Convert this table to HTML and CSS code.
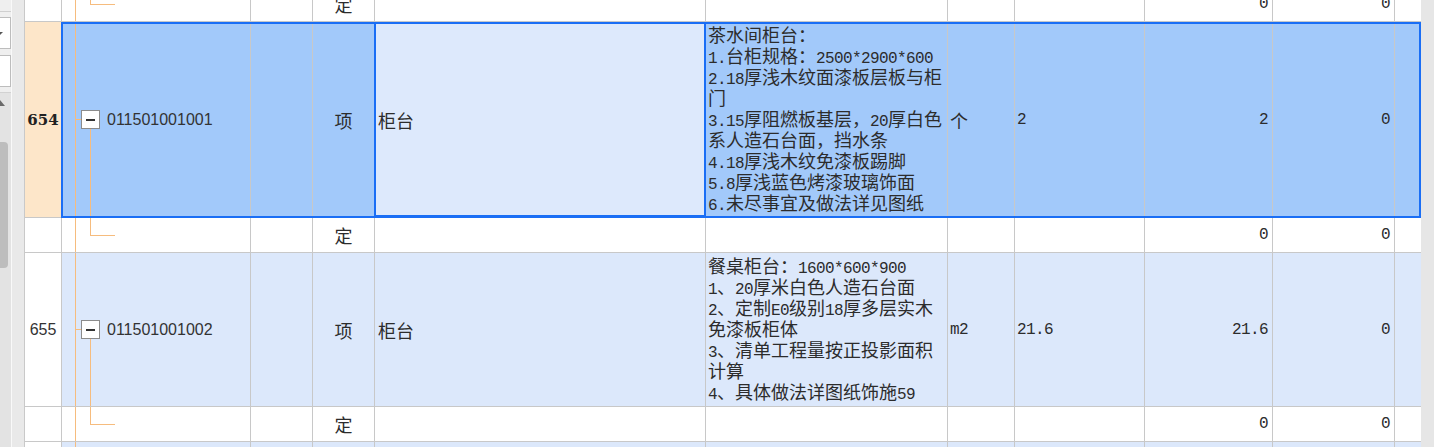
FILE: index.html
```html
<!DOCTYPE html>
<html lang="zh-CN">
<head>
<meta charset="utf-8">
<title>清单列表</title>
<link rel="stylesheet" href="styles.css">
</head>
<body>
<div class="app">
  <aside class="side">
    <div class="side-a">
      <div class="side-top"></div>
      <div class="side-box side-combo"><span class="combo-arrow"></span></div>
      <div class="side-box side-box2"></div>
      <div class="side-scroll">
        <span class="scroll-up"></span>
        <span class="scroll-thumb"></span>
      </div>
    </div>
    <div class="side-b"></div>
  </aside>

  <main class="grid">
    <div class="rows">
      <div class="row ding">
        <div class="c num"></div>
        <div class="c tree"></div>
        <div class="c"></div>
        <div class="c type">定</div>
        <div class="c"></div>
        <div class="c"></div>
        <div class="c"></div>
        <div class="c"></div>
        <div class="c r"><span class="h">0</span></div>
        <div class="c r"><span class="h">0</span></div>
        <div class="c last"></div>
      </div>

      <div class="row item sel">
        <div class="c num">654</div>
        <div class="c tree"><span class="tog"></span><span class="code">011501001001</span></div>
        <div class="c"></div>
        <div class="c type">项</div>
        <div class="c name cur">柜台</div>
        <div class="c feat">茶水间柜台：<br><span class="h">1.</span>台柜规格：<span class="h">2500*2900*600</span><br><span class="h">2.18</span>厚浅木纹面漆板层板与柜<br>门<br><span class="h">3.15</span>厚阻燃板基层，<span class="h">20</span>厚白色<br>系人造石台面，挡水条<br><span class="h">4.18</span>厚浅木纹免漆板踢脚<br><span class="h">5.8</span>厚浅蓝色烤漆玻璃饰面<br><span class="h">6.</span>未尽事宜及做法详见图纸</div>
        <div class="c unit">个</div>
        <div class="c expr"><span class="h">2</span></div>
        <div class="c r"><span class="h">2</span></div>
        <div class="c r"><span class="h">0</span></div>
        <div class="c last"></div>
      </div>

      <div class="row ding">
        <div class="c num"></div>
        <div class="c tree"></div>
        <div class="c"></div>
        <div class="c type">定</div>
        <div class="c"></div>
        <div class="c"></div>
        <div class="c"></div>
        <div class="c"></div>
        <div class="c r"><span class="h">0</span></div>
        <div class="c r"><span class="h">0</span></div>
        <div class="c last"></div>
      </div>

      <div class="row item">
        <div class="c num">655</div>
        <div class="c tree"><span class="tog"></span><span class="code">011501001002</span></div>
        <div class="c"></div>
        <div class="c type">项</div>
        <div class="c name">柜台</div>
        <div class="c feat">餐桌柜台：<span class="h">1600*600*900</span><br><span class="h">1</span>、<span class="h">20</span>厚米白色人造石台面<br><span class="h">2</span>、定制<span class="h">E0</span>级别<span class="h">18</span>厚多层实木<br>免漆板柜体<br><span class="h">3</span>、清单工程量按正投影面积<br>计算<br><span class="h">4</span>、具体做法详图纸饰施<span class="h">59</span></div>
        <div class="c unit"><span class="h">m2</span></div>
        <div class="c expr"><span class="h">21.6</span></div>
        <div class="c r"><span class="h">21.6</span></div>
        <div class="c r"><span class="h">0</span></div>
        <div class="c last"></div>
      </div>

      <div class="row ding">
        <div class="c num"></div>
        <div class="c tree"></div>
        <div class="c"></div>
        <div class="c type">定</div>
        <div class="c"></div>
        <div class="c"></div>
        <div class="c"></div>
        <div class="c"></div>
        <div class="c r"><span class="h">0</span></div>
        <div class="c r"><span class="h">0</span></div>
        <div class="c last"></div>
      </div>

      <div class="row item tail">
        <div class="c num"></div>
        <div class="c tree"><span class="tog"></span></div>
        <div class="c"></div>
        <div class="c"></div>
        <div class="c name"></div>
        <div class="c"></div>
        <div class="c"></div>
        <div class="c"></div>
        <div class="c"></div>
        <div class="c"></div>
        <div class="c last"></div>
      </div>
    </div>
  </main>

  <div class="vstrip"></div>
</div>
</body>
</html>
```

FILE: styles.css
```css
* {
  box-sizing: border-box;
  margin: 0;
  padding: 0;
}

html,
body {
  width: 1434px;
  height: 447px;
  overflow: hidden;
  background: #ffffff;
}

body {
  font-family: "Noto Sans CJK SC", "Liberation Sans", sans-serif;
  font-size: 18px;
  color: #2c2c2c;
}

.app {
  display: flex;
  height: 447px;
}

/* ---------- left strip ---------- */
.side {
  width: 24px;
  flex: none;
  display: flex;
  background: #e9e9e9;
}

.side-a {
  width: 12px;
  display: flex;
  flex-direction: column;
  background: #efefef;
  border-right: 1px solid #f9f9f9;
}

.side-top {
  height: 12px;
  border-bottom: 1px solid #cfcfcf;
}

.side-box {
  height: 32px;
  margin-top: 5px;
  background: #ffffff;
  border: 1px solid #bdbdbd;
  border-left: none;
}

.side-box2 {
  margin-top: 6px;
}

.side-combo {
  display: flex;
  align-items: center;
}

.combo-arrow {
  width: 0;
  height: 0;
  border-top: 3px solid #555555;
  border-right: 3px solid transparent;
}

.side-scroll {
  flex: 1;
  margin-top: 5px;
  padding-top: 7px;
  background: #e3e3e3;
  border-top: 1px solid #d2d2d2;
  display: flex;
  flex-direction: column;
}

.scroll-up {
  width: 0;
  height: 0;
  border-bottom: 6px solid #6a6a6a;
  border-right: 5px solid transparent;
}

.scroll-thumb {
  width: 8px;
  height: 126px;
  margin-top: 36px;
  background: #bdbdbd;
  border-radius: 0 4px 4px 0;
}

.side-b {
  width: 12px;
  background: #e9e9e9;
}

/* ---------- grid ---------- */
.grid {
  width: 1397px;
  flex: none;
  height: 447px;
  overflow: hidden;
  border-left: 1px solid #c9c9c9;
  background: #ffffff;
}

.rows {
  margin-top: -13px;
}

.row {
  position: relative;
  display: grid;
  grid-template-columns: 37px 189px 62px 62px 331px 242px 67px 130px 128px 122px 26px;
  border-bottom: 1px solid #c8c8c8;
}

.ding {
  height: 35px;
  background: #ffffff;
}

.item {
  background: #dce8fb;
}

.tail {
  height: 80px;
}

.c {
  display: flex;
  align-items: center;
  min-width: 0;
  white-space: nowrap;
  border-right: 1px solid #c8c8c8;
}

.last {
  border-right: none;
}

.num {
  justify-content: center;
  background: #ffffff;
  font-family: "Liberation Sans", sans-serif;
  font-size: 16px;
  color: #333333;
}

.type {
  justify-content: center;
}

.name {
  padding-left: 3px;
}

.unit {
  padding-left: 2px;
}

.expr {
  padding-left: 2px;
}

.r {
  justify-content: flex-end;
  padding-right: 4px;
}

.h {
  font-family: "Liberation Mono", monospace;
  font-size: 16px;
  letter-spacing: -0.6px;
  line-height: 1;
}

.feat {
  display: block;
  padding: 2px 2px 4px;
  line-height: 21px;
}

.feat .h {
  line-height: 12px;
}

/* tree connectors */
.tree {
  padding-left: 19px;
  background:
    linear-gradient(#f6bc7e, #f6bc7e) 13px 0 / 1px 100% no-repeat;
}

.ding .tree {
  background:
    linear-gradient(#f6bc7e, #f6bc7e) 13px 0 / 1px 100% no-repeat,
    linear-gradient(#f6bc7e, #f6bc7e) 28px 0 / 1px 50% no-repeat,
    linear-gradient(#f6bc7e, #f6bc7e) 28px 50% / 25px 1px no-repeat;
}

.item .tree {
  background:
    linear-gradient(#f6bc7e, #f6bc7e) 13px 0 / 1px 100% no-repeat,
    linear-gradient(#f6bc7e, #f6bc7e) 13px 50% / 6px 1px no-repeat,
    linear-gradient(#f6bc7e, #f6bc7e) 28px 100% / 1px calc(50% - 9px) no-repeat;
}

.tog {
  flex: none;
  width: 19px;
  height: 19px;
  margin-right: 7px;
  border: 1px solid #8c8c8c;
  background: #ffffff linear-gradient(#333333, #333333) center / 9px 2px no-repeat;
}

.code {
  font-family: "Liberation Sans", sans-serif;
  font-size: 16px;
  color: #333333;
}

/* selection */
.sel {
  background: #a2c9fa;
}

.sel .num {
  background: #fde6c9;
  font-family: "DejaVu Serif", serif;
  font-weight: 700;
  font-size: 15px;
  color: #222222;
}

.sel::after {
  content: "";
  position: absolute;
  left: 36px;
  right: 0;
  top: 0;
  bottom: -1px;
  border: 2px solid #1a6ef5;
  pointer-events: none;
}

.cur {
  position: relative;
  background: #dde9fc;
}

.cur::after {
  content: "";
  position: absolute;
  left: -1px;
  right: -1px;
  top: 0;
  bottom: 0;
  border: 2px solid #1a6ef5;
  pointer-events: none;
}

.vstrip {
  flex: 1;
  background: #e6e6e6;
}
```
